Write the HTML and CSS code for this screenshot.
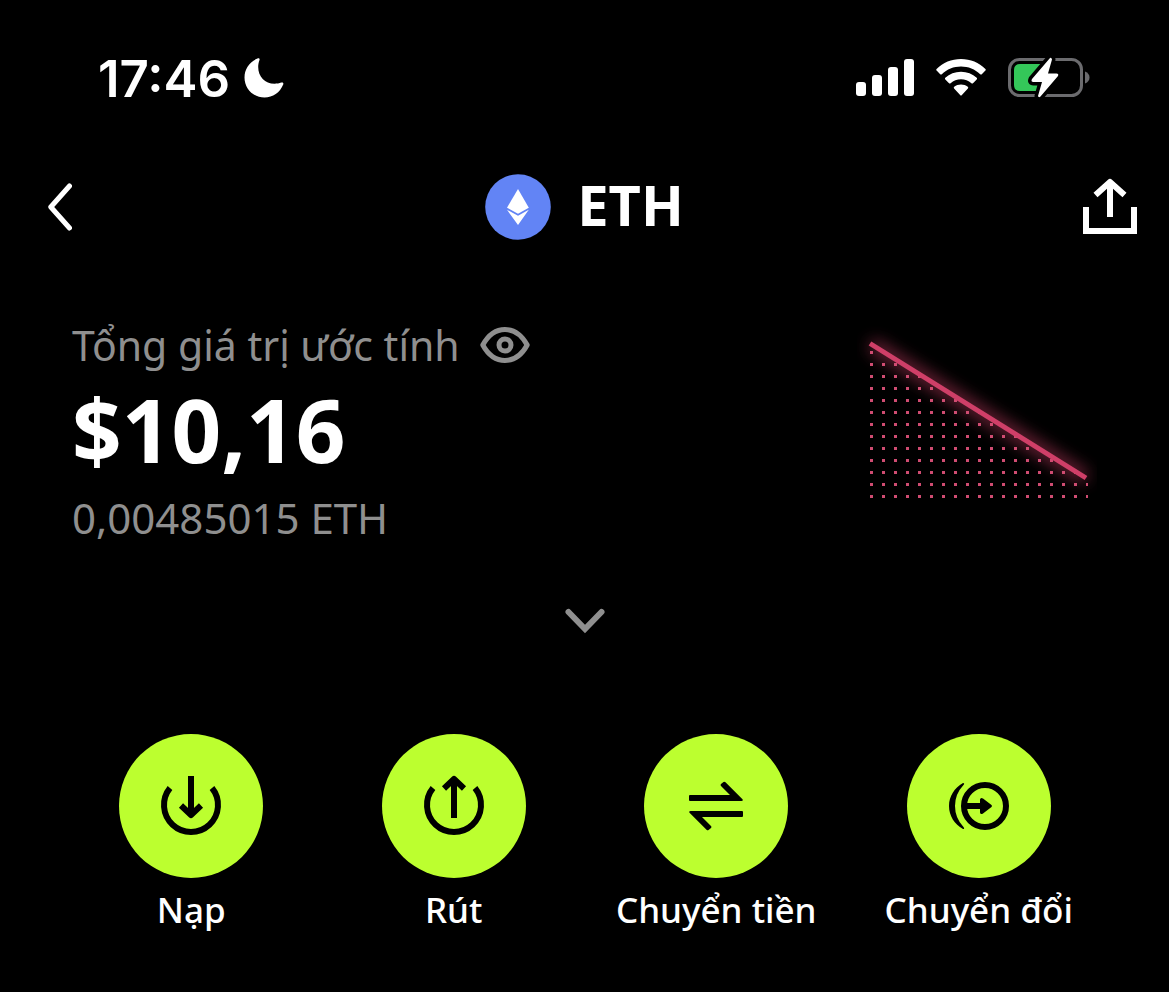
FILE: index.html
```html
<!DOCTYPE html>
<html lang="vi">
<head>
  <meta charset="UTF-8" />
  <meta name="viewport" content="width=device-width, initial-scale=1.0"/>
  <title>ETH</title>
  <link rel="stylesheet" href="styles.css">
</head>
<body>

  <div class="status-bar">
    <div class="status-time">
      <span>17:46</span>
      <svg width="40" height="40" viewBox="0 0 40 40" fill="#fff" aria-hidden="true">
        <path d="M13.5 .6C14.6 0 16 .6 15.5 2C14.6 4.2 14.2 6.5 14.2 9C14.2 18.5 21 25.8 30.5 25.8C33 25.8 35.3 25.4 37.2 24.6C38.8 24 39.8 25 39.2 26.5C36 34.5 28.8 39.5 20.5 39.5C9.3 39.5 .5 30.7 .5 19.5C.5 11 5.5 3.8 13.5 .6Z"/>
      </svg>
    </div>
    <div class="status-icons">
      <svg width="58" height="38" viewBox="0 0 58 38" fill="#fff" aria-hidden="true">
        <rect x="0" y="23" width="10" height="14" rx="3"/>
        <rect x="16" y="16" width="10" height="21" rx="3"/>
        <rect x="32" y="8" width="10" height="29" rx="3"/>
        <rect x="48" y="0" width="10" height="37" rx="3"/>
      </svg>
      <svg width="50" height="38" viewBox="0 0 50 38" fill="#fff" aria-hidden="true">
        <path d="M.6 10C7 3.6 15.5 0 25 0S43 3.6 49.4 10Q50.2 10.8 49.4 11.6L45.8 15.2Q45 16 44.2 15.2C39 10.2 32.3 7.5 25 7.5S11 10.2 5.8 15.2Q5 16 4.2 15.2L.6 11.6Q-.2 10.8 .6 10Z"/>
        <path d="M9.3 18.8C13.5 14.9 19 12.8 25 12.8S36.5 14.9 40.7 18.8Q41.5 19.6 40.7 20.4L37 24.2Q36.2 25 35.4 24.2C32.5 21.6 29 20.3 25 20.3S17.5 21.6 14.6 24.2Q13.8 25 13 24.2L9.3 20.4Q8.5 19.6 9.3 18.8Z"/>
        <path d="M18.2 27.8C20.2 26.3 22.5 25.5 25 25.5S29.8 26.3 31.8 27.8Q32.7 28.6 31.9 29.5L25.9 36Q25 37 24.1 36L18.1 29.5Q17.3 28.6 18.2 27.8Z"/>
      </svg>
      <svg width="82" height="42" viewBox="0 0 82 42" aria-hidden="true">
        <rect x="1.5" y="2.5" width="72" height="36" rx="10" fill="none" stroke="#6b6b6e" stroke-width="3"/>
        <path d="M77 14.5C80 15.7 81.5 17.8 81.5 20.5S80 25.3 77 26.5Z" fill="#6b6b6e"/>
        <path d="M12 7H38L32 34H12Q6 34 6 28V13Q6 7 12 7Z" fill="#34c759"/>
        <path d="M42 1L24 22Q22.5 25 25.5 25H34L30 39Q30.5 41 32.5 39.5L50 19Q51 16.5 48.5 16.5H40L44 2.5Q43.5 0 42 1Z" fill="#fff" stroke="#000" stroke-width="7" stroke-linejoin="round" paint-order="stroke"/>
      </svg>
    </div>
  </div>

  <header class="nav">
    <button class="icon-button back" aria-label="Quay lại">
      <svg width="24" height="48" viewBox="0 0 24 48" fill="none" stroke="#fff" stroke-width="5" stroke-linecap="round" stroke-linejoin="round">
        <path d="M21.5 3L2.8 24L21.5 45"/>
      </svg>
    </button>
    <h1 class="coin">
      <svg width="66" height="66" viewBox="0 0 66 66" aria-hidden="true">
        <circle cx="33" cy="33" r="32.8" fill="#6284f5"/>
        <path d="M33 15L43.8 33.7L33 39.8L22 33.7Z" fill="#fff"/>
        <path d="M22 35.8L33 41.8L43.8 35.8L33 51Z" fill="#fff"/>
      </svg>
      <span>ETH</span>
    </h1>
    <button class="icon-button share" aria-label="Chia sẻ">
      <svg width="54" height="58" viewBox="0 0 54 58" fill="none" stroke="#fff" stroke-width="6" stroke-linejoin="round">
        <path d="M3 29V53H51V29" stroke-linejoin="miter"/>
        <path d="M27 4V39M12.5 17L27 4L41.5 17"/>
      </svg>
    </button>
  </header>

  <main>
    <section class="balance">
      <div>
        <div class="balance-label">
          <span>Tổng giá trị ước tính</span>
          <button class="icon-button" aria-label="Ẩn số dư">
            <svg width="50" height="38" viewBox="0 0 50 38" fill="none" stroke="#8f8f8f" stroke-width="5" stroke-linejoin="round">
              <path d="M2.8 19C8 9.5 15.5 3.5 25 3.5S42 9.5 47.2 19C42 28.5 34.5 34.5 25 34.5S8 28.5 2.8 19Z"/>
              <circle cx="25" cy="19" r="6"/>
            </svg>
          </button>
        </div>
        <div class="amount">$10,16</div>
        <div class="amount-coin">0,00485015 ETH</div>
      </div>
      <svg class="chart" width="240" height="200" viewBox="0 0 240 200" aria-hidden="true">
        <defs>
          <pattern id="dots" x="13" y="36" width="12" height="12" patternUnits="userSpaceOnUse">
            <rect width="3" height="3" fill="#d04c72"/>
          </pattern>
          <filter id="glow" x="-20%" y="-20%" width="140%" height="140%">
            <feGaussianBlur stdDeviation="8"/>
          </filter>
        </defs>
        <path d="M14 29L229 163" stroke="#cf3f68" stroke-width="12" opacity=".6" filter="url(#glow)"/>
        <path d="M13 29L231 164V184H13Z" fill="url(#dots)"/>
        <path d="M13 28.5L229 163" stroke="#cf3f68" stroke-width="5"/>
      </svg>
    </section>

    <button class="icon-button expand" aria-label="Mở rộng">
      <svg width="40" height="26" viewBox="0 0 40 26" fill="none" stroke="#8f8f8f" stroke-width="6" stroke-linecap="round">
        <path d="M3.5 4L20 21L36.5 4"/>
      </svg>
    </button>

    <nav class="actions">
      <button class="action">
        <span class="action-icon">
          <svg width="72" height="72" viewBox="0 0 72 72" fill="none" stroke="#000" stroke-width="6">
            <path d="M15 18A27 27 0 1 0 57 18"/>
            <path d="M36 6V45M26 35.5L36 45L46 35.5" stroke-linejoin="round"/>
          </svg>
        </span>
        <span>Nạp</span>
      </button>
      <button class="action">
        <span class="action-icon">
          <svg width="72" height="72" viewBox="0 0 72 72" fill="none" stroke="#000" stroke-width="6">
            <path d="M15 18A27 27 0 1 0 57 18"/>
            <path d="M36 48V9M26 18.5L36 9L46 18.5" stroke-linejoin="round"/>
          </svg>
        </span>
        <span>Rút</span>
      </button>
      <button class="action">
        <span class="action-icon">
          <svg width="72" height="72" viewBox="0 0 72 72" fill="#000">
            <path d="M10 25H50L41 16Q40 15 41 14L43.5 12Q44.5 11.3 45.5 12.3L62.5 29.3Q63.5 31 61.5 31H10Q9 31 9 30V26Q9 25 10 25Z"/>
            <path d="M62 47H22L31 56Q32 57 31 58L28.5 60Q27.5 60.7 26.5 59.7L9.5 42.7Q8.5 41 10.5 41H62Q63 41 63 42V46Q63 47 62 47Z"/>
          </svg>
        </span>
        <span>Chuyển tiền</span>
      </button>
      <button class="action">
        <span class="action-icon">
          <svg width="72" height="72" viewBox="0 0 72 72" fill="#000">
            <circle cx="42" cy="36" r="21" fill="none" stroke="#000" stroke-width="6"/>
            <path d="M20 13Q22 13 20.5 15Q12 24 12 36T20.5 57Q22 59 20 59C11.5 54 6 46 6 36S11.500 18 20 13Z"/>
            <path d="M22 33H37V29.5Q37.500 27 40 28.5L48.5 35Q49.5 36 48.5 37L40 43.500Q37.500 45 37 42.500V39H22Z"/>
          </svg>
        </span>
        <span>Chuyển đổi</span>
      </button>
    </nav>
  </main>

</body>
</html>
```
FILE: styles.css
```css
* {
  box-sizing: border-box;
}

body {
  margin: 0;
  background-color: #000;
  color: #fff;
  font-family: 'Noto Sans', sans-serif;
}

button {
  padding: 0;
  border: none;
  background: none;
  color: inherit;
  font-family: inherit;
  cursor: pointer;
}

svg {
  display: block;
  flex-shrink: 0;
}

.icon-button {
  display: block;
}

.status-bar {
  display: flex;
  justify-content: space-between;
  align-items: center;
  height: 156px;
  padding: 0 79px 0 98px;
}

.status-time {
  display: flex;
  align-items: center;
  gap: 14px;
  font-family: Inter, sans-serif;
  font-size: 51px;
  font-weight: 600;
}

.status-icons {
  display: flex;
  align-items: center;
  gap: 22px;
}

.nav {
  display: grid;
  grid-template-columns: 1fr auto 1fr;
  align-items: center;
  height: 102px;
  padding: 0 32px;
}

.back {
  justify-self: start;
  padding: 0 16px;
}

.coin {
  display: flex;
  align-items: flex-start;
  gap: 26px;
  margin: 0;
  font-size: 56px;
  font-weight: 700;
  line-height: 60px;
}

.share {
  justify-self: end;
}

.balance {
  display: flex;
  justify-content: space-between;
  align-items: flex-start;
  padding: 57px 72px 0;
}

.balance-label {
  display: flex;
  align-items: center;
  gap: 20px;
  color: #8f8f8f;
  font-size: 41px;
  line-height: 60px;
}

.amount {
  font-size: 87px;
  font-weight: 700;
  line-height: 108px;
}

.amount-coin {
  color: #8f8f8f;
  font-size: 42px;
  line-height: 70px;
}

.expand {
  margin: 0 auto;
  padding: 55px 40px;
}

.actions {
  display: grid;
  grid-template-columns: repeat(4, 1fr);
  padding: 45px 59px 0 60px;
}

.action {
  display: flex;
  flex-direction: column;
  align-items: center;
  font-size: 35px;
  font-weight: 500;
  line-height: 64px;
  white-space: nowrap;
}

.action-icon {
  display: flex;
  align-items: center;
  justify-content: center;
  width: 144px;
  height: 144px;
  border-radius: 50%;
  background-color: #bcff2f;
}
```
